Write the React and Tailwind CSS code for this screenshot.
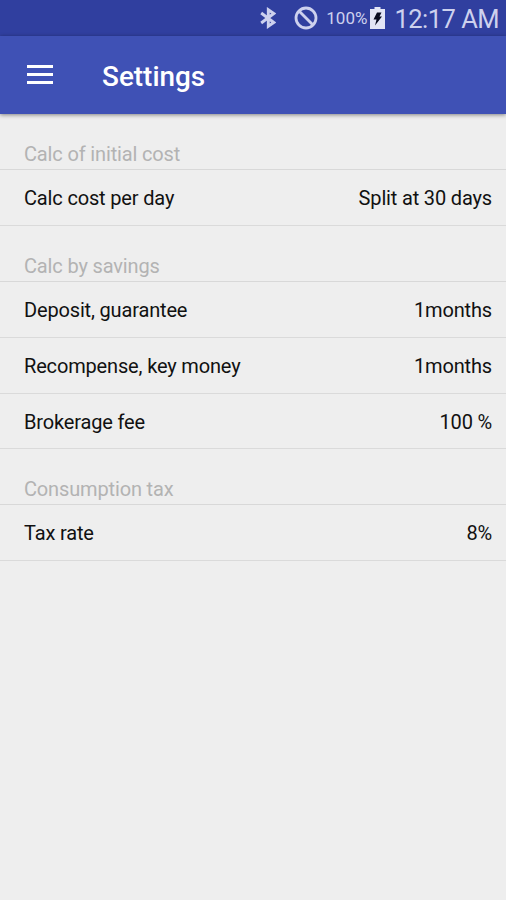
const Row = ({ label, value, h }) => (
  <div className={`flex items-center justify-between border-b border-[#dadada] pl-6 pr-3.5 pt-px text-[20px] tracking-[-0.16px] text-[#111] ${h}`}>
    <span>{label}</span>
    <span>{value}</span>
  </div>
);

const Section = ({ title }) => (
  <div className="flex h-14 items-end border-b border-[#d8d8d8] pb-px pl-6 text-[20px] leading-7 tracking-[-0.15px] text-[#b3b3b3]">
    <span>{title}</span>
  </div>
);

export default function App() {
  return (
    <div className="flex h-[900px] w-[506px] flex-col overflow-hidden bg-[#eeeeee] font-['Roboto',sans-serif]">
      <div className="flex h-9 shrink-0 items-center justify-end bg-[#303f9f] pr-[7px] text-[#cdd1ee]">
        <svg className="mr-[18px] h-[22px] w-4" viewBox="0 0 16 22" fill="none" stroke="currentColor" strokeWidth="2.9">
          <path d="M1.2 6 L13.8 15.5 L8.3 19.3 V2.7 L13.8 6.5 L1.2 16" />
        </svg>
        <svg className="mr-2 h-6 w-6" viewBox="0 0 24 24" fill="none" stroke="currentColor" strokeWidth="2.8">
          <circle cx="12" cy="12" r="10" />
          <path d="M5 5 L19 19" />
        </svg>
        <span className="mr-[3px] pt-0.5 text-[17px]">100%</span>
        <svg className="mr-[9px] h-[22px] w-[15px]" viewBox="0 0 15 22">
          <path fill="#e3e5f6" d="M4.5 0 H10.5 V2 H15 V22 H0 V2 H4.5Z" />
          <path fill="#080b20" d="M7 5.5 H11.5 L9.5 9.5 H12 L5 18.5 L6.5 12.5 H3.5Z" />
        </svg>
        <span className="pt-0.5 text-[25.5px] tracking-[-0.52px]">12:17 AM</span>
      </div>
      <div className="z-10 flex h-[78px] shrink-0 items-center bg-[#3f51b5] pl-[27px] shadow-[0_1px_4px_rgba(0,0,0,0.45)]">
        <div className="mb-0.5 flex w-[26px] flex-col gap-[5px]">
          <div className="h-[3px] bg-white" />
          <div className="h-[3px] bg-white" />
          <div className="h-[3px] bg-white" />
        </div>
        <h1 className="ml-[49px] pt-[3px] text-[27.9px] font-medium text-white">Settings</h1>
      </div>
      <Section title="Calc of initial cost" />
      <Row h="h-14" label="Calc cost per day" value="Split at 30 days" />
      <Section title="Calc by savings" />
      <Row h="h-14" label="Deposit, guarantee" value="1months" />
      <Row h="h-14" label="Recompense, key money" value="1months" />
      <Row h="h-[55px]" label="Brokerage fee" value="100 %" />
      <Section title="Consumption tax" />
      <Row h="h-14" label="Tax rate" value="8%" />
    </div>
  );
}
